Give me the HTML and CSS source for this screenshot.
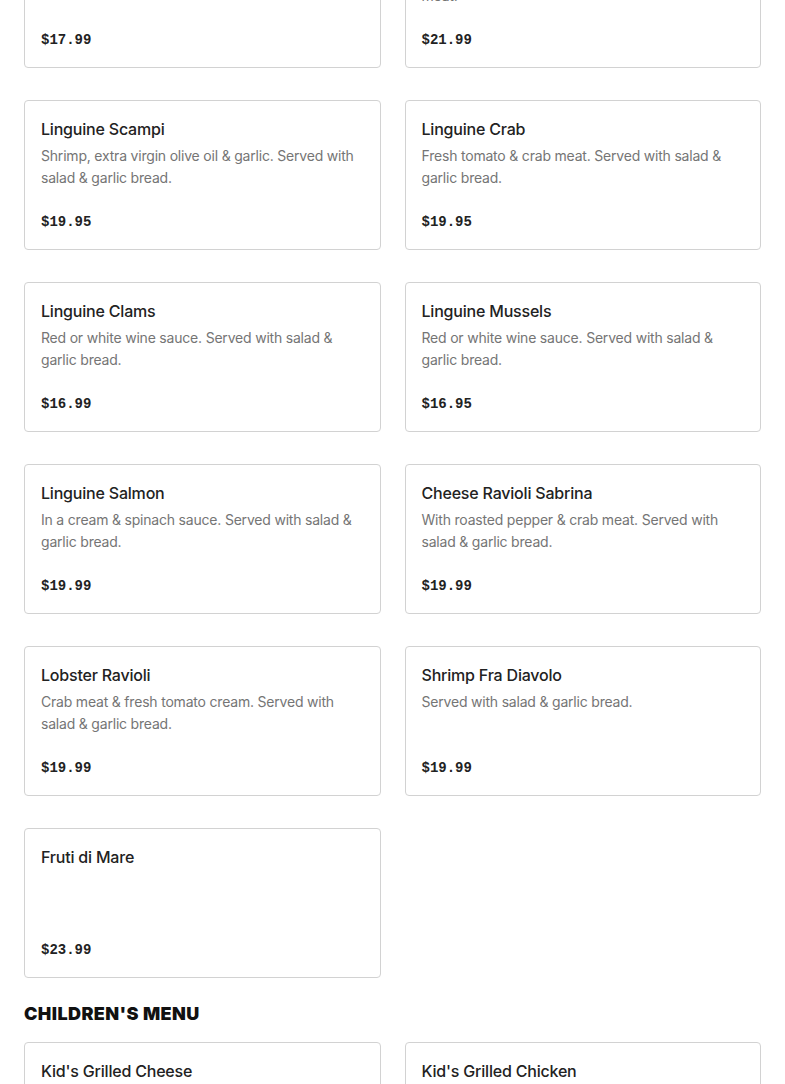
FILE: index.html
```html
<!DOCTYPE html>
<html lang="en">
<head>
  <meta charset="UTF-8">
  <meta name="viewport" content="width=device-width, initial-scale=1.0">
  <title>Menu</title>
  <link rel="stylesheet" href="styles.css">
</head>
<body>
  <main class="menu">
    <section class="menu-section first">
      <div class="items">
        <div class="item">
          <h3>Spaghetti Bolognese</h3>
          <p>Served with salad &amp; garlic bread.</p>
          <div class="price">$17.99</div>
        </div>
        <div class="item">
          <h3>Linguine Pescatore</h3>
          <p>Shrimp, clams &amp; mussels. Served with salad &amp; garlic bread with crab<br>meat.</p>
          <div class="price">$21.99</div>
        </div>
        <div class="item">
          <h3>Linguine Scampi</h3>
          <p>Shrimp, extra virgin olive oil &amp; garlic. Served with salad &amp; garlic bread.</p>
          <div class="price">$19.95</div>
        </div>
        <div class="item">
          <h3>Linguine Crab</h3>
          <p>Fresh tomato &amp; crab meat. Served with salad &amp; garlic bread.</p>
          <div class="price">$19.95</div>
        </div>
        <div class="item">
          <h3>Linguine Clams</h3>
          <p>Red or white wine sauce. Served with salad &amp; garlic bread.</p>
          <div class="price">$16.99</div>
        </div>
        <div class="item">
          <h3>Linguine Mussels</h3>
          <p>Red or white wine sauce. Served with salad &amp; garlic bread.</p>
          <div class="price">$16.95</div>
        </div>
        <div class="item">
          <h3>Linguine Salmon</h3>
          <p>In a cream &amp; spinach sauce. Served with salad &amp; garlic bread.</p>
          <div class="price">$19.99</div>
        </div>
        <div class="item">
          <h3>Cheese Ravioli Sabrina</h3>
          <p>With roasted pepper &amp; crab meat. Served with salad &amp; garlic bread.</p>
          <div class="price">$19.99</div>
        </div>
        <div class="item">
          <h3>Lobster Ravioli</h3>
          <p>Crab meat &amp; fresh tomato cream. Served with salad &amp; garlic bread.</p>
          <div class="price">$19.99</div>
        </div>
        <div class="item">
          <h3>Shrimp Fra Diavolo</h3>
          <p>Served with salad &amp; garlic bread.</p>
          <div class="price">$19.99</div>
        </div>
        <div class="item">
          <h3>Fruti di Mare</h3>
          <div class="price">$23.99</div>
        </div>
      </div>
    </section>

    <section class="menu-section">
      <h2>Children's Menu</h2>
      <div class="items">
        <div class="item">
          <h3>Kid's Grilled Cheese</h3>
          <p>Served with fries.</p>
          <div class="price">$7.99</div>
        </div>
        <div class="item">
          <h3>Kid's Grilled Chicken</h3>
          <p>Served with fries.</p>
          <div class="price">$8.99</div>
        </div>
      </div>
    </section>
  </main>
</body>
</html>
```

FILE: styles.css
```css
* {
  margin: 0;
  padding: 0;
  box-sizing: border-box;
}

body {
  font-family: Inter, 'Liberation Sans', sans-serif;
  background: #fff;
  color: #222;
}

.menu {
  padding: 0 24px;
}

/* page is scrolled: the first row sits partly above the window */
.menu-section.first {
  margin-top: -104px;
}

.menu-section h2 {
  font-size: 18px;
  font-weight: 900;
  text-transform: uppercase;
  letter-spacing: 0.4px;
  color: #111;
  line-height: 24px;
  margin: 24px 0 16px;
}

.items {
  display: grid;
  grid-template-columns: 1fr 1fr;
  gap: 32px 24px;
}

.item {
  display: flex;
  flex-direction: column;
  min-height: 150px;
  padding: 16px;
  border: 1px solid #d2d2d2;
  border-radius: 4px;
}

.item h3 {
  font-size: 16px;
  font-weight: 500;
  letter-spacing: -0.2px;
  line-height: 24px;
  color: #222;
}

.item p {
  font-size: 14px;
  letter-spacing: -0.2px;
  line-height: 22px;
  color: #757575;
  margin-top: 4px;
}

.price {
  margin-top: auto;
  padding-top: 22px;
  font-family: 'Liberation Mono', monospace;
  font-size: 14px;
  font-weight: 700;
  line-height: 22px;
  color: #222;
}
```
